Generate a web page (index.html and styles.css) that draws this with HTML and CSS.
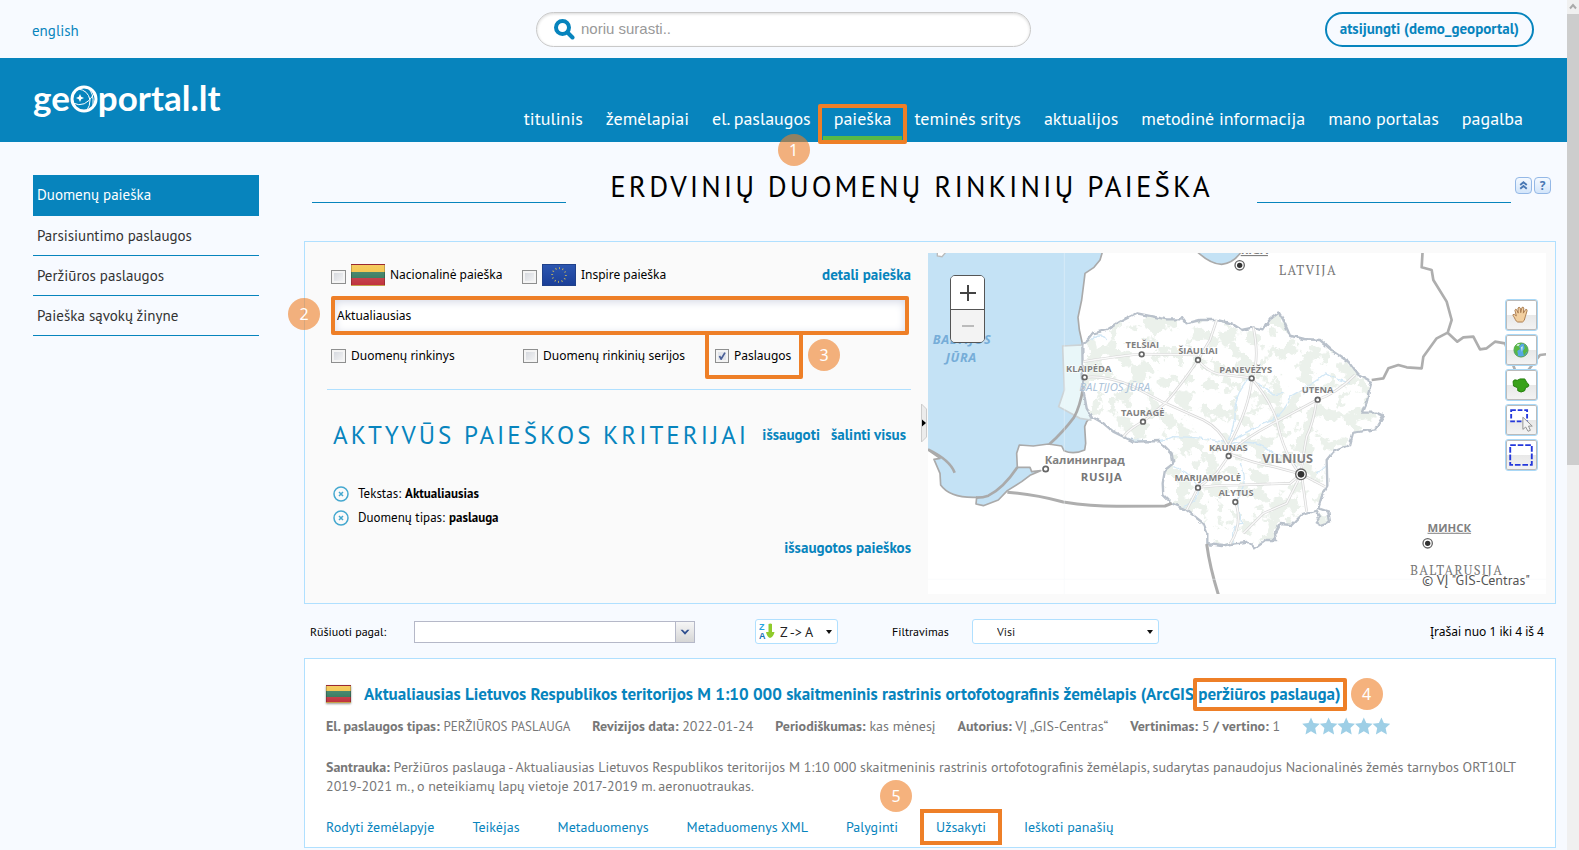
FILE: index.html
```html
<!DOCTYPE html>
<html lang="lt">
<head>
<meta charset="utf-8">
<title>geoportal.lt – duomenų paieška</title>
<link rel="stylesheet" href="styles.css">
</head>
<body>
<div class="page">
  <header>
    <div class="topbar">
      <a class="lang" href="#">english</a>
      <form class="site-search">
        <svg class="lens" viewBox="0 0 21 21"><circle cx="8.500" cy="8.500" r="6.500"/><path d="M13.500 13.500L18.500 18.500"/></svg>
        <input type="search" placeholder="noriu surasti.." aria-label="Paieška portale">
      </form>
      <button class="logout" type="button">atsijungti (demo_geoportal)</button>
    </div>
    <div class="brandbar">
      <a class="logo" href="#"><span>ge</span><svg viewBox="0 0 28 28"><circle cx="14" cy="14" r="12"/><path class="thin" d="M8 4Q18 5 20 15Q20 21 17 25M3 18Q15 24 24 9M18 3Q24 8 23 20"/><path class="spark" d="M10 9L11.200 11.800L14 13L11.200 14.200L10 17L8.800 14.200L6 13L8.800 11.800Z"/></svg><span>portal.lt</span></a>
      <nav class="main-nav">
        <a href="#">titulinis</a>
        <a href="#">žemėlapiai</a>
        <a href="#">el. paslaugos</a>
        <a class="current" href="#">paieška<span class="badge badge-1">1</span></a>
        <a href="#">teminės sritys</a>
        <a href="#">aktualijos</a>
        <a href="#">metodinė informacija</a>
        <a href="#">mano portalas</a>
        <a href="#">pagalba</a>
      </nav>
    </div>
  </header>

  <div class="body">
    <nav class="side-nav">
      <a class="active" href="#">Duomenų paieška</a>
      <a href="#">Parsisiuntimo paslaugos</a>
      <a href="#">Peržiūros paslaugos</a>
      <a href="#">Paieška sąvokų žinyne</a>
    </nav>

    <main>
      <div class="title-row">
        <h1>Erdvinių duomenų rinkinių paieška</h1>
        <div class="title-tools">
          <button type="button" aria-label="Suskleisti"><svg viewBox="0 0 16 16"><path d="M4.500 7.500L8 4.500L11.500 7.500M4.500 11.500L8 8.500L11.500 11.500"/></svg></button>
          <button type="button" aria-label="Pagalba">?</button>
        </div>
      </div>

      <section class="search-panel">
        <span class="badge badge-2">2</span>
        <form class="criteria">
          <div class="scope">
            <label><input type="checkbox"><span class="flag lt"></span>Nacionalinė paieška</label>
            <label><input type="checkbox"><svg class="flag eu" viewBox="0 0 34 22"><circle cx="17" cy="11" r="7.500"/></svg>Inspire paieška</label>
            <a class="strong-link" href="#">detali paieška</a>
          </div>
          <input class="query" type="text" value="Aktualiausias" aria-label="Paieškos tekstas">
          <div class="types">
            <label><input type="checkbox">Duomenų rinkinys</label>
            <label><input type="checkbox">Duomenų rinkinių serijos</label>
            <label class="marked"><input type="checkbox" checked>Paslaugos</label>
            <span class="badge badge-3">3</span>
          </div>
          <div class="active-head">
            <h2>Aktyvūs paieškos kriterijai</h2>
            <a class="strong-link" href="#">išsaugoti</a>
            <a class="strong-link" href="#">šalinti visus</a>
          </div>
          <ul class="filters">
            <li><button type="button" aria-label="Pašalinti"><svg viewBox="0 0 16 16"><circle cx="8" cy="8" r="7"/><path d="M6 6L10 10M10 6L6 10"/></svg></button>Tekstas: <b>Aktualiausias</b></li>
            <li><button type="button" aria-label="Pašalinti"><svg viewBox="0 0 16 16"><circle cx="8" cy="8" r="7"/><path d="M6 6L10 10M10 6L6 10"/></svg></button>Duomenų tipas: <b>paslauga</b></li>
          </ul>
          <a class="strong-link saved" href="#">išsaugotos paieškos</a>
        </form>

        <button class="splitter" type="button" aria-label="Suskleisti"><svg viewBox="0 0 6 38"><path class="grip" d="M.500 0L5.500 5V33L.500 38Z"/><path class="arrow" d="M1 15.500L5 19L1 22.500Z"/></svg></button>

        <div class="map">
          <svg class="map-art" viewBox="24 39 1854 1023" preserveAspectRatio="xMidYMid slice">
            <defs>
              <path id="lt" d="M487 315L505 300L520 280L560 270L600 245L650 220L700 230L740 238L778 238L785 230L800 250L840 240L890 240L935 250L965 270L1000 262L1030 268L1050 238L1077 218L1090 240L1110 287L1150 297L1200 300L1240 335L1285 365L1310 400L1355 425L1345 460L1340 490L1328 518L1370 518L1390 527L1365 568L1300 578L1290 615L1240 635L1220 660L1222 740L1205 770L1195 805L1225 815L1230 845L1200 855L1188 848L1200 830L1190 812L1145 825L1115 855L1080 852L1065 880L1068 900L1040 900L1005 925L985 905L930 912L905 918L862 912L862 880L850 850L800 810L755 790L730 765L728 730L735 690L760 670L755 640L718 603L640 605L580 575L550 550L515 530L500 505L490 450L488 400Z"/>
              <clipPath id="inside"><use href="#lt"/></clipPath>
              <filter id="woods" x="0" y="0" width="1" height="1"><feTurbulence type="fractalNoise" baseFrequency=".022" numOctaves="4" seed="7"/><feColorMatrix values="0 0 0 0 .83  0 0 0 0 .88  0 0 0 0 .83  24 0 0 0 -12.600"/></filter>
              <filter id="wiggle"><feTurbulence type="fractalNoise" baseFrequency=".05" numOctaves="2" seed="4"/><feDisplacementMap in="SourceGraphic" scale="12" xChannelSelector="R" yChannelSelector="G"/></filter>
            </defs>
            <rect class="ground" x="0" y="0" width="1900" height="1100"/>
            <path class="sea" d="M10 20H552L540 60L522 82L495 100L492 125L485 180L474 232L478 270L487 310L490 400L494 450L508 500L512 530L500 545L494 560L497 610L494 630Q460 645 432 632L425 618L385 612L340 618L298 615L290 640L292 682L330 682L335 695L362 692L330 706L305 725L262 752L235 780L190 797L168 792L170 772Q90 775 62 735L60 700L42 658L60 655L10 620Z"/>
            <path class="sea" d="M826 30Q870 73 905 73Q940 70 965 34Z"/>
            <path class="isle" d="M52 36V48L66 50L78 36Z"/>
            <path class="waters" d="M428 318L487 315L490 460L508 500L512 540L480 535L416 500L433 450Z"/>
            <path class="spit" d="M490 440Q480 500 462 532Q430 575 388 613M292 682Q250 745 205 767Q190 773 168 773M24 628Q90 660 104 698"/>
            <g filter="url(#wiggle)">
              <g clip-path="url(#inside)">
                <use href="#lt" fill="#fff"/>
                <rect x="480" y="210" width="920" height="720" filter="url(#woods)"/>
                <path class="river" d="M515 300Q540 270 560 300M550 550Q580 585 640 600Q720 610 760 590Q850 590 925 610M925 600Q950 540 945 500Q955 440 1000 400M985 420Q1020 430 1060 465L1090 460M925 610Q1000 560 1060 540Q1100 510 1110 470Q1180 430 1220 400L1260 420L1290 430M930 615Q1000 590 1060 640Q1120 660 1150 700M760 680Q800 690 830 730Q850 780 790 800M960 670Q990 720 950 780L965 850Q930 850 940 910M1190 700Q1240 670 1230 640M1150 460Q1170 440 1180 450"/>
              </g>
              <use href="#lt" class="border-lt"/>
            </g>
            <g class="road-edge"><path id="roads" d="M490 365Q580 350 660 342L834 345M494 412Q560 405 640 440L730 487L850 540Q900 565 925 620M610 590Q630 565 669 545L735 490Q780 440 834 360M834 360L870 300L890 240M834 360Q870 405 920 405L990 413M995 415Q1020 360 1000 262M995 415Q990 500 925 620M995 415Q1050 480 1070 540Q1090 640 1140 702M925 640Q980 590 1070 545L1190 480Q1250 460 1305 405M1190 480Q1180 550 1160 590Q1150 640 1143 702M925 640Q1000 670 1060 680L1143 702L1215 740M834 743Q880 735 960 735L1110 730L1143 702M926 648L890 700L834 743L800 810M946 785Q970 850 930 912M1140 710L1100 790L1030 820L970 880M1145 705L1160 815"/></g>
            <use href="#roads" class="road"/>
            <path class="border thick" d="M262 757Q340 762 430 786Q520 800 600 799L735 798L755 790M860 912Q870 985 897 1070"/>
            <path class="border" d="M1355 420L1390 415L1405 385L1435 375L1460 382L1505 385L1510 350L1550 295L1583 278L1595 240L1580 185L1540 120L1535 90L1505 82L1508 30M1583 278L1612 305L1630 292L1660 290L1680 328L1700 325L1725 305L1755 310L1785 390Q1803 415 1825 390L1860 345L1885 342"/>
            <path class="tile" d="M433 39V1062M24 1018H1878"/>
            <g class="town">
              <circle cx="665" cy="343" r="7"/><circle cx="834" cy="360" r="7"/><circle cx="494" cy="412" r="7"/><circle cx="995" cy="415" r="7"/><circle cx="1193" cy="479" r="7"/><circle cx="669" cy="545" r="7"/><circle cx="926" cy="648" r="7"/><circle cx="834" cy="743" r="7"/><circle cx="946" cy="786" r="7"/><circle cx="377" cy="687" r="8"/>
            </g>
            <g class="capital">
              <circle class="halo" cx="959" cy="76" r="14"/><circle cx="959" cy="76" r="8"/>
              <circle class="halo" cx="1143" cy="703" r="16"/><circle cx="1143" cy="703" r="10"/>
              <circle class="halo" cx="1523" cy="910" r="14"/><circle cx="1523" cy="910" r="8"/>
            </g>
            <g class="city">
              <text x="667" y="325">TELŠIAI</text><text x="834" y="342">ŠIAULIAI</text><text x="506" y="395">KLAIPĖDA</text><text x="977" y="398">PANEVĖŽYS</text><text x="1193" y="460">UTENA</text><text x="668" y="527">TAURAGĖ</text><text x="925" y="632">KAUNAS</text><text x="863" y="724">MARIJAMPOLĖ</text><text x="948" y="768">ALYTUS</text>
            </g>
            <text class="vilnius" x="1103" y="670">VILNIUS</text>
            <text class="cyr" x="494" y="671">Калининград</text>
            <text class="cyr under" x="1588" y="875">МИНСК</text>
            <text class="cyr under" x="1003" y="42">RĪGA</text>
            <g class="land">
              <text x="1164" y="105">LATVIJA</text><text class="sans" x="545" y="724">RUSIJA</text><text x="1610" y="1004">BALTARUSIJA</text>
            </g>
            <g class="water"><text x="126" y="311">BALTIJOS</text><text x="124" y="365">JŪRA</text></g>
            <text class="water faint" x="584" y="452">BALTIJOS JŪRA</text>
          </svg>
          <div class="zoom"><button type="button" aria-label="Priartinti"><svg viewBox="0 0 16 16"><path d="M0 8H16M8 0V16"/></svg></button><button type="button" aria-label="Atitolinti" disabled><svg viewBox="0 0 16 16"><path d="M2 8H14"/></svg></button></div>
          <div class="map-tools">
            <button type="button" aria-label="Stumti"><svg viewBox="0 0 32 32"><path d="M10 21C9 18 7 17 7.500 15.500Q9 14.500 11 17L9.500 11Q10 9 11.500 10.500L13 14L12.800 8.500Q14 7 15.200 8.500L15.700 13.500L17 8Q18.500 7 19 8.500L18.500 14L21 10Q22.500 9.500 22.500 11.500L20.500 18Q20 22.500 17.500 23.500H12.500Q11 23 10 21Z" fill="#f2cf9f" stroke="#a97a4d"/></svg></button>
            <button type="button" aria-label="Visas pasaulis"><svg viewBox="0 0 32 32"><circle cx="16" cy="16" r="7.500" fill="#57a8e4" stroke="#4f9a45"/><path d="M9 13Q12 7 17 9L14 12L15 15L12 17L13 22Q8 20 9 13ZM19 10Q24 13 23 17L19 22L18 17L20 14Z" fill="#58b843"/><path d="M11 11Q13 9 15 10L13 12ZM16 13L18 12L17 18Z" fill="#d8f3e5"/></svg></button>
            <button type="button" aria-label="Visa Lietuva"><svg viewBox="0 0 32 32"><path d="M7.500 12Q9 9.500 12 11L15 9.500H20L22 13L24.500 16Q24 19 21 18.500L20 22Q16 25 12.500 22L12.500 19L8 17Z" fill="#39a21a" stroke="#227d0b"/></svg></button>
            <button type="button" aria-label="Pasirinkti objektą"><svg viewBox="0 0 32 32"><path d="M5.500 5.500H22.500V17.500H5.500Z" fill="none" stroke="#2438dc" stroke-width="2" stroke-dasharray="5 2"/><path d="M18 13V26L21 23.500L23.500 28L26 27L24 22.500H28Z" fill="#f4f4f4" stroke="#8e8e8e"/></svg></button>
            <button type="button" aria-label="Pasirinkti plotą"><svg viewBox="0 0 32 32"><path d="M4.500 5.500H27.500V26.500H4.500Z" fill="none" stroke="#2438dc" stroke-width="2" stroke-dasharray="6 2"/></svg></button>
          </div>
          <span class="credit">© VĮ "GIS-Centras"</span>
        </div>
      </section>

      <div class="sortbar">
        <label for="sort">Rūšiuoti pagal:</label>
        <span class="select combo"><select id="sort"><option></option></select><svg viewBox="0 0 20 20"><path d="M5 7.500L10 13L15 7.500H12.500L10 10L7.500 7.500Z"/></svg></span>
        <span class="select order"><svg class="az" viewBox="0 0 16 18"><text x="0" y="8" fill="#25a6df">Z</text><text x="0" y="17" fill="#1673b5">A</text><path d="M9.500 2Q11.500 1 13 2V10H15.500Q14.500 15 11 16Q8 15 7 10H9.500Z" fill="#8fcb2d"/></svg><select aria-label="Tvarka"><option>Z -&gt; A</option></select><i></i></span>
        <label class="filter-label" for="filter">Filtravimas</label>
        <span class="select filter"><select id="filter"><option>Visi</option></select><i></i></span>
        <span class="count">Įrašai nuo 1 iki 4 iš 4</span>
      </div>

      <article class="record">
        <h3><span class="flag lt small"></span><a href="#">Aktualiausias Lietuvos Respublikos teritorijos M 1:10 000 skaitmeninis rastrinis ortofotografinis žemėlapis (ArcGIS <span class="marked">peržiūros paslauga)</span></a><span class="badge badge-4">4</span></h3>
        <div class="meta">
          <span><b>El. paslaugos tipas:</b> <small>PERŽIŪROS PASLAUGA</small></span>
          <span><b>Revizijos data:</b> 2022-01-24</span>
          <span><b>Periodiškumas:</b> kas mėnesį</span>
          <span><b>Autorius:</b> VĮ „GIS-Centras“</span>
          <span><b>Vertinimas:</b> 5 <b>/ vertino:</b> 1</span>
          <svg class="stars" viewBox="0 0 88 18" role="img" aria-label="5 iš 5"><defs><path id="star" d="M9 .500L11.500 6L17.800 6.700L13.200 11L14.500 17.500L9 14.300L3.500 17.500L4.800 11L.200 6.700L6.500 6Z"/></defs><use href="#star"/><use href="#star" x="17.600"/><use href="#star" x="35.200"/><use href="#star" x="52.800"/><use href="#star" x="70.400"/></svg>
        </div>
        <p><b>Santrauka:</b> Peržiūros paslauga - Aktualiausias Lietuvos Respublikos teritorijos M 1:10 000 skaitmeninis rastrinis ortofotografinis žemėlapis, sudarytas panaudojus Nacionalinės žemės tarnybos ORT10LT 2019-2021 m., o neteikiamų lapų vietoje 2017-2019 m. aeronuotraukas.</p>
        <div class="actions">
          <a href="#">Rodyti žemėlapyje</a>
          <a href="#">Teikėjas</a>
          <a href="#">Metaduomenys</a>
          <a href="#">Metaduomenys XML</a>
          <a href="#">Palyginti</a>
          <a class="marked" href="#">Užsakyti<span class="badge badge-5">5</span></a>
          <a href="#">Ieškoti panašių</a>
        </div>
      </article>
    </main>
  </div>
</div>
<div class="scrollbar" aria-hidden="true"><svg viewBox="0 0 12 14"><path d="M3 8.500L6 5L9 8.500"/></svg><div class="thumb"></div></div>
</body>
</html>
```
FILE: styles.css
```css
* { box-sizing: border-box; }

body {
  margin: 0;
  height: 100vh;
  overflow: hidden;
  display: flex;
  background: #f7faff;
  color: #000;
  font: 13px/18px "PT Sans", Lato, sans-serif;
}

a { color: #0784bd; text-decoration: none; }
button { padding: 0; font: inherit; cursor: pointer; }
h1, h2, h3, p, ul { margin: 0; padding: 0; }
svg { display: block; }

.page { flex: 1; min-width: 0; }

/* Header */
.topbar {
  height: 58px;
  padding: 0 33px 0 32px;
  display: grid;
  grid-template-columns: 504px minmax(0, 495px) 1fr;
  align-items: center;
}
.lang { font-size: 15px; line-height: 20px; padding-top: 4px; }
.site-search {
  height: 35px;
  padding: 0 17px;
  display: flex;
  align-items: center;
  gap: 6px;
  border: 1px solid #c9c9c9;
  border-radius: 18px;
  background: #fff;
  box-shadow: inset 0 1px 3px #d8d8d8;
}
.lens { width: 21px; height: 21px; fill: none; stroke: #0784bd; stroke-width: 4; stroke-linecap: round; }
.site-search input {
  flex: 1;
  border: 0;
  padding: 0;
  outline: 0;
  background: none;
  font: 15px/20px "Liberation Sans", sans-serif;
}
.site-search input::placeholder { color: #999; }
.logout {
  justify-self: end;
  height: 35px;
  padding: 0 13px;
  border: 2px solid #0784bd;
  border-radius: 18px;
  background: none;
  color: #0784bd;
  font-size: 15px;
  font-weight: bold;
}
.brandbar {
  height: 84px;
  padding: 0 33px;
  display: flex;
  justify-content: space-between;
  align-items: flex-end;
  background: #0784bd;
}
.logo {
  align-self: flex-start;
  display: flex;
  align-items: center;
  padding-top: 19px;
  color: #fff;
  font: bold 35px/40px Lato, sans-serif;
}
.logo svg { width: 28px; height: 28px; margin-top: 4px; fill: none; stroke: #fff; stroke-width: 3; }
.logo .thin { stroke-width: 1; }
.logo .spark { fill: #fff; stroke: none; }
.main-nav { display: flex; gap: 1px; height: 36px; margin-bottom: 2px; }
.main-nav a {
  position: relative;
  padding: 3px 11px 0;
  color: #fff;
  font-size: 18px;
  line-height: 24px;
}
.main-nav .current { border-bottom: 4px solid #56b947; }
.main-nav .current::after {
  content: "";
  position: absolute;
  inset: 0 -5px -8px;
  border: 4px solid #ee7f27;
  border-radius: 2px;
}

.badge {
  position: absolute;
  width: 32px;
  height: 32px;
  border-radius: 50%;
  background: rgba(238, 127, 39, .6);
  color: #fff;
  text-align: center;
  font: 16px/32px "Noto Sans", sans-serif;
}
.badge-1 { left: -45px; top: 30px; z-index: 1; }
.badge-2 { left: -17px; top: 56px; }
.badge-3 { left: 481px; top: 4px; }
.badge-4 { right: -42px; top: -1px; }

/* Columns */
.body {
  display: grid;
  grid-template-columns: 226px minmax(0, 1fr);
  gap: 45px;
  padding: 0 11px 0 33px;
}
.side-nav { padding-top: 33px; }
.side-nav a {
  display: block;
  height: 40px;
  padding: 10px 4px;
  border-bottom: 1px solid #0784bd;
  color: #333;
  font-size: 15px;
  line-height: 20px;
}
.side-nav .active { height: 41px; background: #0784bd; color: #fff; }

.title-row { height: 99px; padding: 24px 5px 0 8px; display: flex; align-items: flex-start; }
h1 {
  flex: 1;
  display: flex;
  gap: 44px;
  font-size: 29px;
  font-weight: 400;
  line-height: 40px;
  letter-spacing: 3px;
  text-transform: uppercase;
  white-space: nowrap;
}
h1::before, h1::after { content: ""; flex: 1; height: 36px; border-bottom: 1px solid #0784bd; }
.title-tools { display: flex; gap: 2px; padding: 11px 0 0 4px; }
.title-tools button {
  width: 17px;
  height: 17px;
  border: 1px solid #94b8e6;
  border-radius: 4px;
  background: linear-gradient(#f4f9ff, #d3e5fa);
  color: #4878b4;
  font: bold 12px/14px "Open Sans", sans-serif;
}
.title-tools svg { width: 15px; height: 15px; fill: none; stroke: #4878b4; stroke-width: 2; }

/* Search panel */
.search-panel {
  position: relative;
  display: flex;
  align-items: flex-start;
  padding: 11px 9px 9px 22px;
  border: 1px solid #b0e0ff;
  background: #fafafa;
}
.criteria { width: 584px; padding-top: 9px; }
.scope, .types { display: flex; align-items: center; padding-left: 4px; }
.scope { height: 25px; }
.scope label, .types label { display: flex; align-items: center; white-space: nowrap; font: 12px/18px "Noto Sans", sans-serif; }
.scope label { width: 191px; gap: 5px; }
.scope .strong-link { margin-left: auto; }
.criteria input[type="checkbox"] {
  appearance: none;
  flex: none;
  margin: 0;
  width: 15px;
  height: 14px;
  border: 1px solid #8e8f8f;
  background: linear-gradient(135deg, #cfd3da, #f8f8f8);
  box-shadow: inset 0 0 0 2px #f4f4f4;
}
.criteria .scope input[type="checkbox"] { margin-top: 4px; }
.criteria .types input:checked {
  background: url("data:image/svg+xml,%3Csvg xmlns='http://www.w3.org/2000/svg' viewBox='0 0 14 14'%3E%3Cpath d='M4 7l2 3.500L10.500 3' fill='none' stroke='%234a5f97' stroke-width='2'/%3E%3C/svg%3E") center / 100% #e2e5eb;
}
.flag { flex: none; width: 34px; height: 22px; }
.flag.lt {
  background: linear-gradient(#ffffff44, #ffffff11), linear-gradient(#f2b928 34%, #1f6b4c 34% 66%, #bc2530 66%);
  border: 1px solid #00000033;
}
.flag.eu { background: linear-gradient(#2c56b0, #1a3f98); border: 1px solid #20418a; fill: none; stroke: #c9b75a; stroke-width: 2; stroke-dasharray: 1 2.900; }
.flag.small { width: 25px; height: 18px; margin-right: 13px; box-shadow: 0 1px 2px #999; }
.strong-link { font-size: 15px; font-weight: bold; line-height: 20px; white-space: nowrap; }
.query {
  display: block;
  width: 578px;
  height: 39px;
  margin: 9px 0 0 4px;
  padding: 0 2px;
  border: 4px solid #ee7f27;
  border-radius: 2px;
  background: #fff;
  box-shadow: inset 0 2px 8px #d5d9e6;
  font: 12px/18px "Noto Sans", sans-serif;
}
.types { position: relative; height: 55px; border-bottom: 1px solid #b0e0ff; padding-bottom: 12px; }
.types label { width: 192px; gap: 5px; }
.types label.marked {
  position: absolute;
  left: 378px;
  top: -4px;
  width: 98px;
  height: 48px;
  padding: 2px 6px 0;
  border: 4px solid #ee7f27;
  border-radius: 2px;
}
.types label.marked input { width: 14px; }
.active-head { display: flex; align-items: center; gap: 11px; padding: 27px 5px 0 6px; }
h2 {
  flex: 1;
  color: #0784bd;
  font-size: 25px;
  font-weight: 400;
  line-height: 36px;
  letter-spacing: 3px;
  text-transform: uppercase;
  white-space: nowrap;
}
.filters { list-style: none; padding: 29px 0 0 6px; }
.filters li { display: flex; align-items: center; gap: 4px; height: 24px; }
.filters button { margin-right: 5px; width: 16px; height: 16px; border: 0; background: none; }
.filters svg { fill: none; stroke: #45a8cf; stroke-width: 1.500; }
.saved { display: block; margin-top: 8px; text-align: right; }

.splitter { width: 6px; height: 38px; margin: 151px 1px 0 10px; border: 0; background: none; }
.splitter .grip { fill: #ececec; stroke: #ccc; }

/* Map */
.map { position: relative; flex: 1; min-width: 0; height: 341px; }
.map-art { width: 100%; height: 100%; text-anchor: middle; font-family: "Open Sans", "Noto Sans", sans-serif; }
.ground { fill: #fff; }
.sea { fill: #c4e2f5; stroke: #aaa; stroke-width: 5; stroke-linejoin: round; }
.isle { fill: #fff; stroke: #bbb; stroke-width: 4; }
.waters { fill: #e9f7f9; stroke: #ccd3d6; stroke-width: 5; }
.spit { fill: none; stroke: #aaa; stroke-width: 8; }
.border-lt { fill: none; stroke: #b9c1cb; stroke-width: 7; }
.border { fill: none; stroke: #aeaeae; stroke-width: 8; stroke-linejoin: round; }
.thick { stroke-width: 9; }
.river { fill: none; stroke: #d3e8f6; stroke-width: 4; }
.road-edge { fill: none; stroke: #d6d6d6; stroke-width: 8; }
.road { fill: none; stroke: #fafafa; stroke-width: 4; }
.tile { stroke: #f2f6f9; stroke-width: 2; opacity: .6; }
.town circle { fill: #fff; stroke: #666; stroke-width: 5; }
.capital circle { fill: #333; }
.capital .halo { fill: #fff; stroke: #666; stroke-width: 4; }
.map-art text { paint-order: stroke; stroke: #fff; stroke-width: 3; fill: #808080; }
.city { font: bold 28px "Open Sans", sans-serif; }
.map-art .vilnius { font: bold 38px "Open Sans", sans-serif; }
.map-art .cyr { font: bold 34px "Open Sans", sans-serif; }
.map-art .under { text-decoration: underline; }
.land { font: 38px "PT Serif", "Noto Serif", "Liberation Serif", serif; }
.map-art .land text { fill: #777; letter-spacing: 4px; }
.map-art .land .sans { font: bold 34px "Open Sans", sans-serif; letter-spacing: 2px; }
.water { font: italic bold 38px "Open Sans", sans-serif; }
.map-art .water text { fill: #76add8; stroke: none; letter-spacing: 2px; }
.map-art .faint { font-size: 34px; font-weight: 400; fill: #a9c1d8; stroke: none; }
.zoom {
  position: absolute;
  left: 22px;
  top: 22px;
  width: 35px;
  border: 1px solid #555;
  border-radius: 5px;
  overflow: hidden;
}
.zoom button { display: grid; place-items: center; width: 100%; height: 33px; border: 0; background: #fff; }
.zoom button + button { border-top: 1px solid #555; background: #f3f3f3; }
.zoom svg { width: 16px; height: 16px; fill: none; stroke: #444; stroke-width: 2; }
.zoom button + button svg { stroke: #bbb; }
.map-tools { position: absolute; right: 8px; top: 46px; display: grid; gap: 3px; }
.map-tools button {
  width: 33px;
  height: 32px;
  border: 1px solid #a9d8f6;
  border-radius: 3px;
  background: linear-gradient(#fff 50%, #e8e8e8 50%, #f4f4f4);
  box-shadow: inset 0 0 0 1px #bbb;
}
.map-tools svg { width: 30px; height: 30px; }
.credit {
  position: absolute;
  right: 16px;
  bottom: 5px;
  color: #555;
  font-size: 14px;
  text-shadow: 0 0 2px #fff, 0 0 2px #fff, 0 0 2px #fff;
}

/* Sorting */
.sortbar { display: flex; align-items: center; height: 54px; padding: 1px 12px 0 6px; font-size: 12px; }
.sortbar label { width: 104px; }
.sortbar .filter-label { width: 80px; margin-left: 54px; }
.select { position: relative; display: block; }
.select select {
  appearance: none;
  width: 100%;
  height: 100%;
  margin: 0;
  border: 1px solid #b0e0ff;
  border-radius: 3px;
  background: #fff;
  color: #222;
  font: inherit;
}
.combo { width: 281px; height: 22px; }
.combo select { border-color: #b5b8c8; border-radius: 0; }
.combo svg {
  position: absolute;
  right: 1px;
  top: 1px;
  width: 19px;
  height: 20px;
  border-left: 1px solid #b5b8c8;
  background: linear-gradient(#f6f6f6, #d6d6d6);
  fill: #2f4f8f;
  pointer-events: none;
}
.order { width: 83px; height: 25px; margin-left: 60px; font-size: 14px; }
.order select { padding: 0 0 0 24px; }
.az { position: absolute; left: 4px; top: 3px; width: 16px; height: 18px; font: bold 9px "Liberation Sans", sans-serif; pointer-events: none; }
.select i {
  position: absolute;
  right: 6px;
  top: 11px;
  border: 3px solid transparent;
  border-top: 4px solid #111;
  pointer-events: none;
}
.filter { width: 187px; height: 25px; }
.filter select { padding: 0 24px; }
.count { margin-left: auto; font: 12px/18px "Noto Sans", sans-serif; }

/* Record */
.record { padding: 20px 10px 2px 21px; border: 1px solid #b0e0ff; background: #fff; color: #777; font-size: 14px; }
h3 {
  position: relative;
  width: max-content;
  height: 30px;
  display: flex;
  align-items: center;
  font-size: 17px;
  line-height: 24px;
  white-space: nowrap;
}
h3 .marked { position: relative; }
h3 .marked::after {
  content: "";
  position: absolute;
  inset: -5px -6px -6px -5px;
  border: 4px solid #ee7f27;
  border-radius: 2px;
}
.meta { display: flex; align-items: center; gap: 22px; height: 34px; white-space: nowrap; }
.meta small { font-size: 13px; }
.stars { width: 88px; height: 18px; fill: #9ecfe6; }
.record p { padding-top: 15px; line-height: 19px; }
.actions { display: flex; gap: 38px; padding-top: 13px; line-height: 36px; }
.actions a { position: relative; }
.actions .marked::after {
  content: "";
  position: absolute;
  inset: 0 -16px;
  border: 4px solid #ee7f27;
}
.badge-5 { left: -56px; top: -29px; }

/* Page scrollbar */
.scrollbar { width: 12px; background: #f0f0f0; }
.scrollbar svg { width: 12px; height: 14px; fill: none; stroke: #aaa; stroke-width: 2; }
.thumb { height: 53%; background: #cdcdcd; }
```
